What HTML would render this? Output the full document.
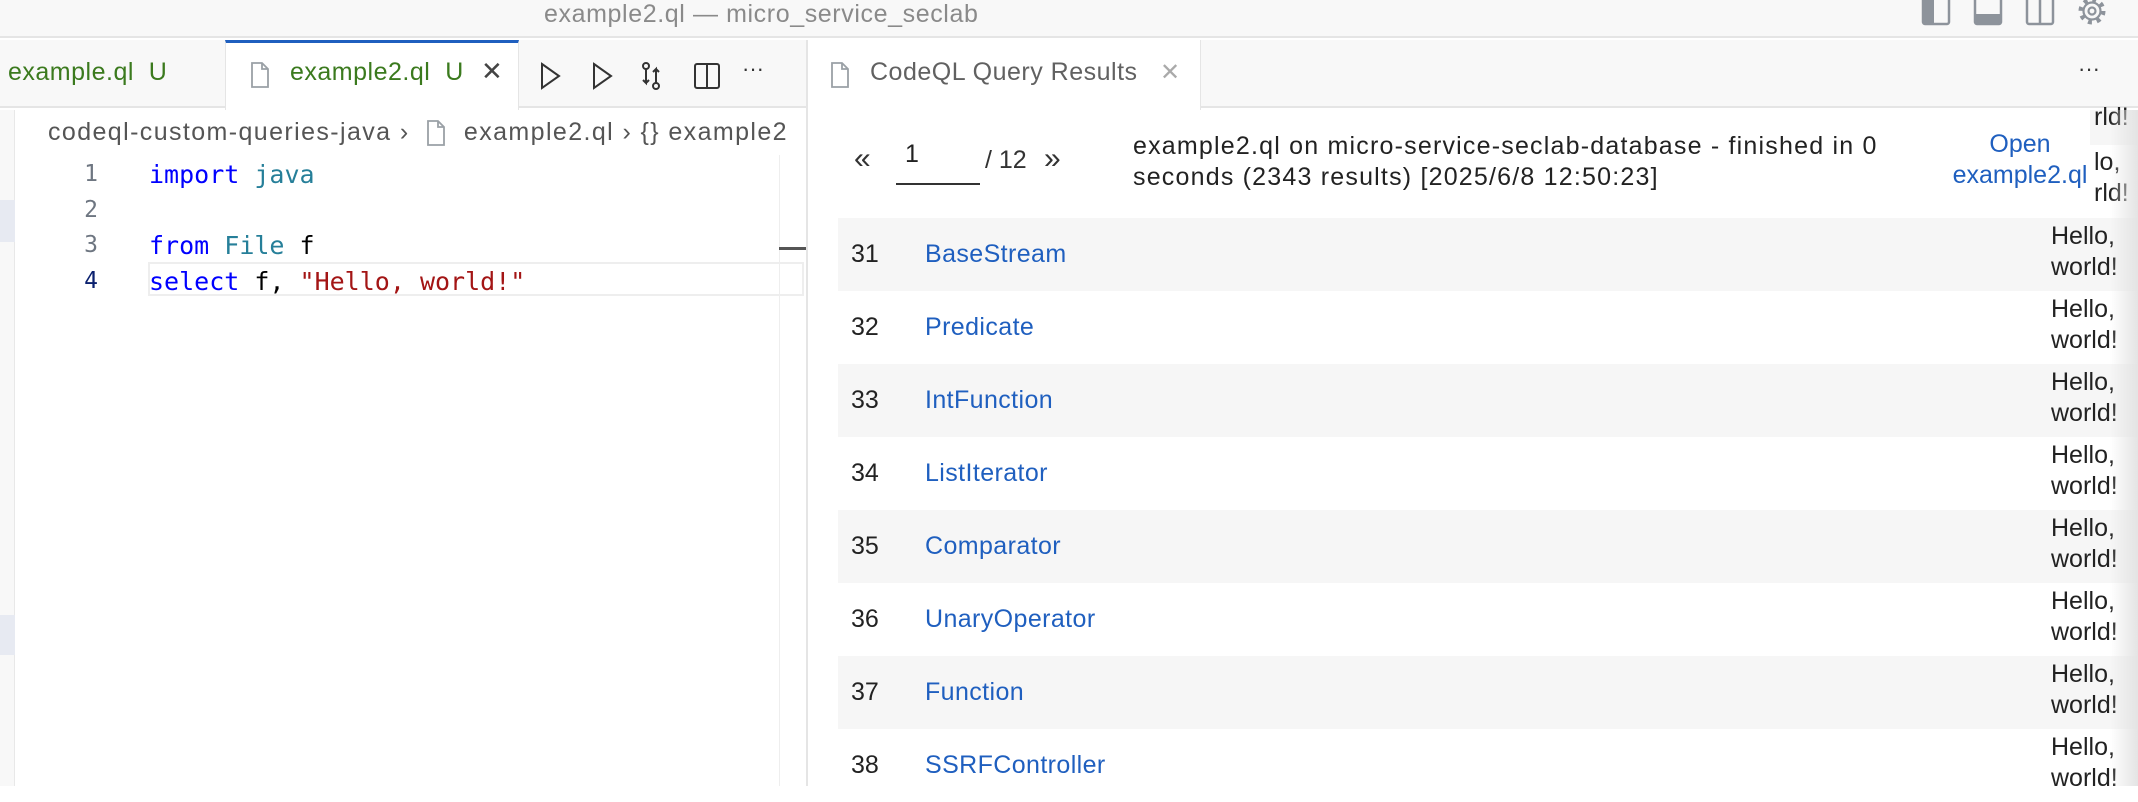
<!DOCTYPE html>
<html><head><style>
*{margin:0;padding:0;box-sizing:border-box}
body{width:2138px;height:786px;overflow:hidden;background:#fff;font-family:"Liberation Sans",sans-serif;position:relative;color:#333}
.a{position:absolute;white-space:nowrap}
.mono{font-family:"DejaVu Sans Mono","Liberation Mono",monospace}
.t{font-size:25px;letter-spacing:0.5px}
</style></head><body>
<!-- title bar -->
<div class="a" style="left:0;top:0;width:2138px;height:38px;background:#f8f8f8;border-bottom:2px solid #e5e5e5"></div>
<div class="a" style="left:544px;top:0px;font-size:25px;letter-spacing:0.6px;color:#8a8a8a">example2.ql — micro_service_seclab</div>
<svg class="a" style="left:1920px;top:0" width="200" height="30" fill="none" stroke="#8d939b" stroke-width="2.5">
<rect x="3" y="-4" width="26" height="28" rx="2"/><rect x="4" y="-4" width="10" height="27" fill="#8d939b" stroke="none"/>
<rect x="55" y="-4" width="26" height="28" rx="2"/><rect x="55" y="14" width="26" height="10" fill="#8d939b" stroke="none"/>
<rect x="107" y="-4" width="26" height="28" rx="2"/><line x1="120" y1="-4" x2="120" y2="24"/>
<circle cx="172" cy="11" r="11" stroke-width="5" stroke-dasharray="3.8 4.84"/>
<circle cx="172" cy="11" r="8.5" stroke-width="2.2"/>
<circle cx="172" cy="11" r="3.5" stroke-width="2.2"/>
</svg>
<!-- left tabs bar -->
<div class="a" style="left:0;top:40px;width:806px;height:68px;background:#f8f8f8;border-bottom:2px solid #e5e5e5"></div>
<div class="a" style="left:225px;top:40px;width:294px;height:70px;background:#fff;border-top:3px solid #1f5fbf;border-left:1px solid #e5e5e5;border-right:1px solid #e5e5e5"></div>
<div class="a t" style="left:8px;top:58px;color:#3b7a1e">example.ql&nbsp; U</div>
<svg class="a" style="left:250px;top:61px" width="20" height="28" fill="none" stroke="#9aa0a6" stroke-width="1.8"><path d="M2 2h10l6 6v18H2z M12 2v6h6"/></svg>
<div class="a t" style="left:290px;top:58px;color:#3b7a1e">example2.ql&nbsp; U</div>
<div class="a" style="left:481px;top:56px;font-size:26px;color:#444">✕</div>
<svg class="a" style="left:538px;top:60px" width="260" height="32" fill="none" stroke="#333" stroke-width="2">
<path d="M4 4l17 12L4 28z"/><path d="M56 4l17 12-17 12z"/>
<circle cx="108" cy="6" r="3"/><circle cx="118" cy="26" r="3"/><path d="M108 9v14l-3-3M108 23l3-3M118 23V9l-3 3M118 9l3 3"/>
<rect x="157" y="4" width="24" height="24" rx="2"/><line x1="169" y1="4" x2="169" y2="28"/>
</svg>
<div class="a" style="left:742px;top:56px;font-size:22px;color:#333">···</div>
<!-- left strip -->
<div class="a" style="left:0;top:110px;width:15px;height:676px;background:#f8f8f8;border-right:1px solid #e8e8e8"></div>
<div class="a" style="left:0;top:200px;width:15px;height:42px;background:#e7eaf2"></div>
<div class="a" style="left:0;top:615px;width:15px;height:40px;background:#e7eaf2"></div>
<!-- breadcrumb -->
<div class="a" style="left:48px;top:118px;font-size:25px;letter-spacing:1.4px;color:#555;display:flex;align-items:center">codeql-custom-queries-java&nbsp;›&nbsp;<svg width="22" height="28" fill="none" stroke="#9aa0a6" stroke-width="1.8" style="margin:0 16px 0 8px"><path d="M2 2h10l6 6v18H2z M12 2v6h6"/></svg>example2.ql&nbsp;›&nbsp;{}&nbsp;example2</div>
<!-- code -->
<div class="a" style="left:779px;top:155px;width:1px;height:631px;background:#eee"></div>
<div class="a" style="left:779px;top:247px;width:27px;height:3px;background:#555"></div>
<div class="a" style="left:148px;top:262px;width:656px;height:34px;border:2px solid #eee"></div>
<div class="a mono" style="left:78px;top:157px;font-size:23px;line-height:35.7px;color:#6e7681;text-align:right;width:20px">1<br>2<br>3<br><span style="color:#0b216f">4</span></div>
<div class="a mono" style="left:149px;top:157px;font-size:25px;line-height:35.7px;color:#000">
<span style="color:#0000ff">import</span> <span style="color:#267f99">java</span><br><br>
<span style="color:#0000ff">from</span> <span style="color:#267f99">File</span> f<br>
<span style="color:#0000ff">select</span> f, <span style="color:#a31515">"Hello, world!"</span></div>
<!-- right panel -->
<div class="a" style="left:806px;top:40px;width:2px;height:746px;background:#e5e5e5"></div>
<div class="a" style="left:808px;top:40px;width:1330px;height:68px;background:#f8f8f8;border-bottom:2px solid #e5e5e5"></div>
<div class="a" style="left:808px;top:40px;width:393px;height:70px;background:#fff;border-right:1px solid #e5e5e5"></div>
<svg class="a" style="left:830px;top:61px" width="20" height="28" fill="none" stroke="#9aa0a6" stroke-width="1.8"><path d="M2 2h10l6 6v18H2z M12 2v6h6"/></svg>
<div class="a t" style="left:870px;top:58px;color:#616161">CodeQL Query Results</div>
<div class="a" style="left:1160px;top:58px;font-size:24px;color:#aaa">✕</div>
<div class="a" style="left:2078px;top:56px;font-size:22px;color:#333">···</div>
<!-- pagination -->
<div class="a" style="left:854px;top:142px;font-size:30px;color:#333">«</div>
<div class="a" style="left:905px;top:140px;font-size:25px;color:#222">1</div>
<div class="a" style="left:896px;top:183px;width:84px;height:2px;background:#333"></div>
<div class="a" style="left:985px;top:146px;font-size:25px;color:#333">/ 12</div>
<div class="a" style="left:1044px;top:142px;font-size:30px;color:#333">»</div>
<div class="a" style="left:1133px;top:131px;font-size:25px;letter-spacing:1.2px;line-height:31px;color:#222">example2.ql on micro-service-seclab-database - finished in 0<br>seconds (2343 results) [2025/6/8 12:50:23]</div>
<div class="a" style="left:1940px;top:129px;width:160px;text-align:center;font-size:25px;line-height:31px;color:#1f5fbf">Open<br>example2.ql</div>
<div class="a" style="left:2090px;top:110px;width:48px;height:35px;background:#f6f6f6"></div>
<div class="a" style="left:2094px;top:102px;font-size:25px;line-height:31px;color:#222">rld!</div>
<div class="a" style="left:2094px;top:147px;font-size:25px;line-height:31px;color:#222">lo,<br>rld!</div>
<!-- rows -->
<div class="a" style="left:838px;top:218px;width:1300px;height:73px;background:#f6f6f6"></div>
<div class="a" style="left:838px;top:364px;width:1300px;height:73px;background:#f6f6f6"></div>
<div class="a" style="left:838px;top:510px;width:1300px;height:73px;background:#f6f6f6"></div>
<div class="a" style="left:838px;top:656px;width:1300px;height:73px;background:#f6f6f6"></div>
<div class="a" style="left:851px;top:218px;font-size:25px;line-height:73px;color:#222">31<br>32<br>33<br>34<br>35<br>36<br>37<br>38</div>
<div class="a" style="left:925px;top:218px;font-size:25px;letter-spacing:0.4px;line-height:73px;color:#1f5fbf">BaseStream<br>Predicate<br>IntFunction<br>ListIterator<br>Comparator<br>UnaryOperator<br>Function<br>SSRFController</div>
<div class="a" style="left:2051px;top:221px;font-size:25px;line-height:31px;color:#222">Hello,<br>world!</div>
<div class="a" style="left:2051px;top:294px;font-size:25px;line-height:31px;color:#222">Hello,<br>world!</div>
<div class="a" style="left:2051px;top:367px;font-size:25px;line-height:31px;color:#222">Hello,<br>world!</div>
<div class="a" style="left:2051px;top:440px;font-size:25px;line-height:31px;color:#222">Hello,<br>world!</div>
<div class="a" style="left:2051px;top:513px;font-size:25px;line-height:31px;color:#222">Hello,<br>world!</div>
<div class="a" style="left:2051px;top:586px;font-size:25px;line-height:31px;color:#222">Hello,<br>world!</div>
<div class="a" style="left:2051px;top:659px;font-size:25px;line-height:31px;color:#222">Hello,<br>world!</div>
<div class="a" style="left:2051px;top:732px;font-size:25px;line-height:31px;color:#222">Hello,<br>world!</div>
<div class="a" style="left:2110px;top:110px;width:28px;height:676px;background:linear-gradient(to right,rgba(235,235,235,0),rgba(225,225,225,0.9))"></div>
</body></html>
